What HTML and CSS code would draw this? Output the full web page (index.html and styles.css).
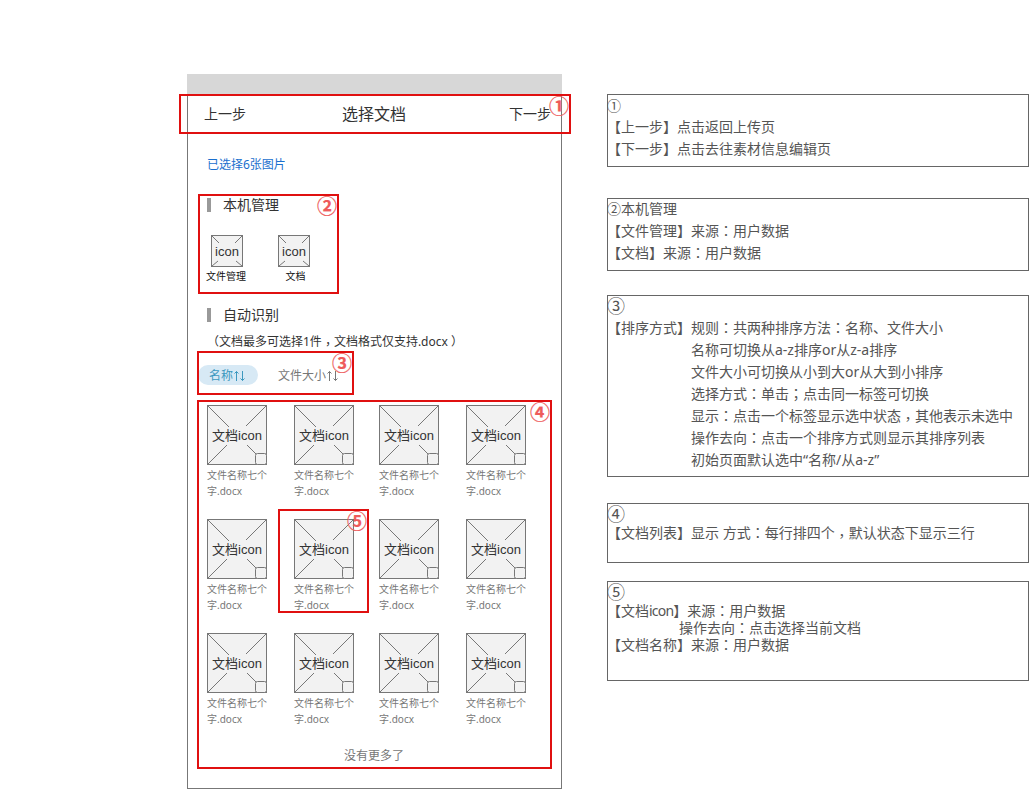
FILE: index.html
```html
<!DOCTYPE html>
<html lang="zh-CN">
<head>
<meta charset="utf-8">
<title>选择文档</title>
<link rel="stylesheet" href="styles.css">
</head>
<body>
<svg class="defs" width="0" height="0">
  <symbol id="small" viewBox="0 0 32 32"><rect x=".5" y=".5" width="31" height="31" fill="#f2f2f2" stroke="#777"/><path d="M1 1l7 7M31 1l-7 7M1 31l6-5M31 31l-6-5" stroke="#777" fill="none"/></symbol>
  <symbol id="doc" viewBox="0 0 60 60"><rect x=".5" y=".5" width="59" height="59" fill="#f2f2f2" stroke="#777"/><path d="M1 1l21 21M59 1L39 21M1 59l19-19M40 40l9 9" stroke="#777" fill="none"/><rect x="48.500" y="48.500" width="11" height="11" rx="2" fill="#f2f2f2" stroke="#777"/></symbol>
</svg>
<div class="page">
  <main class="phone">
    <div class="status"></div>
    <header class="nav"><span>上一步</span><h1>选择文档</h1><span>下一步</span></header>
    <p class="selected">已选择6张图片</p>
    <h2 class="section">本机管理</h2>
    <div class="sources">
      <div class="source"><div class="thumb"><svg width="32" height="32"><use href="#small"/></svg><b>icon</b></div><span>文件管理</span></div>
      <div class="source"><div class="thumb"><svg width="32" height="32"><use href="#small"/></svg><b>icon</b></div><span class="shift">文档</span></div>
    </div>
    <h2 class="section">自动识别</h2>
    <p class="limit">（文档最多可选择1件<i class="comma" lang="zh-TW">，</i>文档格式仅支持.docx ）</p>
    <div class="tabs"><span class="tab active">名称<svg width="13" height="12" viewBox="0 0 13 12"><path d="M3.500 11V1.500M1.500 3.500l2-2 2 2M9.500 1v9.500M7.500 8.500l2 2 2-2"/></svg></span><span class="tab">文件大小<svg width="13" height="12" viewBox="0 0 13 12"><path d="M3.500 11V1.500M1.500 3.500l2-2 2 2M9.500 1v9.500M7.500 8.500l2 2 2-2"/></svg></span></div>
    <div class="grid" id="grid"></div>
    <p class="end">没有更多了</p>
    <div class="mark m1"><em>①</em></div>
    <div class="mark m2"><em>②</em></div>
    <div class="mark m3"><em>③</em></div>
    <div class="mark m4"><em>④</em></div>
    <div class="mark m5"><em>⑤</em></div>
  </main>
  <aside class="notes">
    <section class="note n1"><p class="num">①</p><p>【上一步】点击返回上传页</p><p>【下一步】点击去往素材信息编辑页</p></section>
    <section class="note n2"><p><span class="num">②</span>本机管理</p><p>【文件管理】来源<i lang="zh-TW">：</i>用户数据</p><p>【文档】来源<i lang="zh-TW">：</i>用户数据</p></section>
    <section class="note n3"><p class="num big">③</p><p>【排序方式】规则<i lang="zh-TW">：</i>共两种排序方法<i lang="zh-TW">：</i>名称、文件大小</p>
      <div class="indent"><p>名称可切换从a-z排序or从z-a排序</p><p>文件大小可切换从小到大or从大到小排序</p><p>选择方式<i lang="zh-TW">：</i>单击<i lang="zh-TW">；</i>点击同一标签可切换</p><p>显示<i lang="zh-TW">：</i>点击一个标签显示选中状态<i class="comma" lang="zh-TW">，</i>其他表示未选中</p><p>操作去向<i lang="zh-TW">：</i>点击一个排序方式则显示其排序列表</p><p>初始页面默认选中“名称/从a-z”</p></div></section>
    <section class="note n4"><p class="num big">④</p><p>【文档列表】显示 方式<i lang="zh-TW">：</i>每行排四个<i class="comma" lang="zh-TW">，</i>默认状态下显示三行</p></section>
    <section class="note n5"><p class="num big">⑤</p><p>【文档<span class="latin">icon</span>】来源<i lang="zh-TW">：</i>用户数据</p><p class="sub">操作去向<i lang="zh-TW">：</i>点击选择当前文档</p><p>【文档名称】来源<i lang="zh-TW">：</i>用户数据</p></section>
  </aside>
</div>
<script src="app.js"></script>
</body>
</html>
```

FILE: styles.css
```css
* { box-sizing: border-box; margin: 0; padding: 0; }
body { width: 1029px; height: 789px; overflow: hidden; background: #fff; color: #333; font-family: "Noto Sans", "Noto Sans CJK SC", sans-serif; font-size: 14px; font-weight: 400; }
.defs { position: absolute; }
i { font-style: normal; font-family: "Noto Sans CJK TC", sans-serif; line-height: 0; }
.comma { vertical-align: -3px; }
.page { display: flex; align-items: flex-start; padding: 74px 0 0 187px; }
.phone { position: relative; width: 375px; height: 715px; border: 1px solid #777; border-top: 0; white-space: nowrap; }
.status { height: 21px; margin: 0 -1px; background: #d7d7d7; }
.nav { display: flex; justify-content: space-between; align-items: center; height: 39px; padding: 0 10px 4px 16px; }
.nav h1 { font-size: 16px; font-weight: 400; padding-right: 7px; }
.selected { height: 20px; line-height: 20px; margin: 21px 0 0 19px; font-size: 12px; color: #1a6fce; }
.section { display: flex; align-items: center; gap: 12px; height: 20px; margin: 20px 0 0 19px; font-size: 14px; font-weight: 400; line-height: 20px; }
.section::before { content: ""; width: 4px; height: 14px; background: #999; }
.sources { display: flex; gap: 27px; height: 69px; padding: 20px 0 0 18px; }
.source { display: flex; flex-direction: column; align-items: center; width: 40px; font-size: 10px; line-height: 18px; color: #111; }
.shift { padding-left: 5px; }
.thumb { display: grid; place-items: center; }
.source .thumb { margin-left: 2px; }
.thumb svg, .thumb b { grid-area: 1 / 1; }
.thumb b { padding-top: 2px; font: 400 13px/20px "Liberation Sans", "Noto Sans CJK SC", sans-serif; color: #333; }
.sources + .section { margin-top: 21px; }
.limit { height: 20px; line-height: 20px; margin: 7px 0 0 19px; font-size: 12px; }
.tabs { display: flex; gap: 9px; height: 20px; margin: 13px 0 0 10px; font-size: 12px; line-height: 20px; }
.tab { display: flex; align-items: center; padding: 2px 11px 0; color: #777; border-radius: 10px; }
.tab.active { color: #3c98bf; background: #d7e9f5; width: 60px; }
.tab svg { fill: none; stroke: currentColor; flex: none; }
.grid { display: grid; grid-template-columns: 87px 85px 87px 60px; grid-auto-rows: 114px; margin: 20px 0 0 19px; }
.file { width: 62px; }
.file .thumb { width: 60px; height: 60px; }
.file p { margin-top: 2px; font-size: 10px; line-height: 16px; color: #777; }
.end { height: 20px; line-height: 20px; margin: -1px 0 0 156px; font-size: 12px; color: #777; }
.mark { position: absolute; border: 2px solid #e01010; }
.mark em { position: absolute; right: 0; top: 0; width: 20px; height: 20px; font: 700 20px/20px "Noto Sans CJK SC", sans-serif; color: #ee5b5b; -webkit-text-stroke: .2px #ee5b5b; }
.m1 { left: -9px; top: 20px; width: 392px; height: 40px; }
.m2 { left: 10px; top: 120px; width: 141px; height: 100px; }
.m3 { left: 9px; top: 277px; width: 157px; height: 44px; }
.m4 { left: 9px; top: 326px; width: 355px; height: 369px; }
.m5 { left: 90px; top: 435px; width: 91px; height: 104px; }
.notes { width: 422px; margin: 20px 0 0 45px; color: #555; white-space: nowrap; }
.note { border: 1px solid #666; }
.note p { height: 22px; line-height: 20px; margin-left: -1px; }
.num { font-family: "Noto Sans CJK SC", sans-serif; line-height: 0; }
.note .big { font-size: 18px; line-height: 19px; }
.n1 { height: 73px; }
.n2 { height: 73px; margin-top: 31px; }
.n3 { height: 182px; margin-top: 24px; }
.n4 { height: 60px; margin-top: 26px; }
.n5 { height: 100px; margin-top: 18px; }
.n4 .big { height: 19px; }
.n5 p { height: 17px; line-height: 17px; }
.n5 .big { height: 20px; line-height: 19px; }
.indent { padding-left: 84px; }
.note .sub { padding-left: 72px; }
.latin { letter-spacing: -.8px; }
```

FILE: app.js
```js
const grid = document.getElementById('grid');
for (let n = 0; n < 12; n++) {
  grid.insertAdjacentHTML('beforeend', '<div class="file"><div class="thumb"><svg width="60" height="60"><use href="#doc"/></svg><b>文档icon</b></div><p>文件名称七个<br>字.docx</p></div>');
}
```
